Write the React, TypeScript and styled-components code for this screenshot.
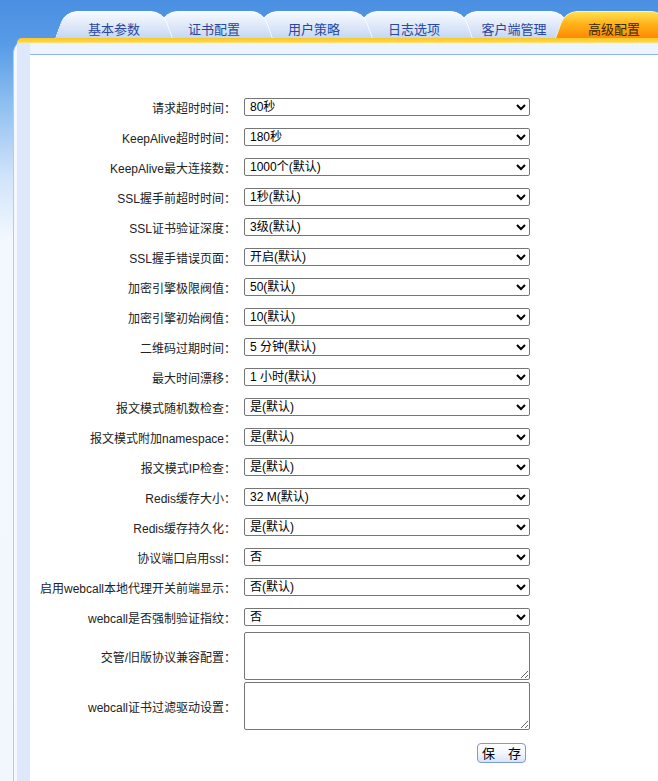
import React from 'react';
import styled, { createGlobalStyle } from 'styled-components';

const GlobalStyle = createGlobalStyle`
  html, body {
    margin: 0;
    padding: 0;
    height: 100%;
  }
  body {
    overflow: hidden;
    font-family: "Liberation Sans", "Noto Sans CJK SC", sans-serif;
    background: linear-gradient(180deg, #4a8fe1 0px, #589be7 45px, #8fc0f0 105px, #cfe3f9 175px, #f3f8ff 240px, #f2f7fe 100%);
  }
`;

const Page = styled.div`
  min-height: 100vh;
  display: flex;
  flex-direction: column;
`;

const TabRow = styled.div`
  height: 38px;
  display: flex;
  align-items: flex-end;
  padding-left: 55px;
  box-sizing: border-box;
`;

interface TabProps {
  $active?: boolean;
  $order: number;
}

const Tab = styled.div<TabProps>`
  position: relative;
  z-index: ${p => (p.$active ? 20 : 10 - p.$order)};
  flex: none;
  width: 118px;
  height: 27px;
  margin-right: -18px;
  padding-top: 12px;
  box-sizing: border-box;
  text-align: center;
  font-size: 13px;
  line-height: 13px;
  color: ${p => (p.$active ? '#3a2600' : '#2947a0')};
  cursor: pointer;

  &::before,
  &::after {
    content: '';
    position: absolute;
    top: 0;
    bottom: 0;
    width: 60%;
    z-index: -1;
    transform-origin: bottom;
    background: ${p =>
      p.$active
        ? 'linear-gradient(180deg, #ffe04e 0%, #ffb31a 45%, #ff8a05 100%)'
        : 'linear-gradient(180deg, #f7faff 0%, #e2ebfa 45%, #c6d7f4 100%)'};
    border-top: 1px solid ${p => (p.$active ? '#fff3b0' : '#ffffff')};
  }

  &::before {
    left: 0;
    transform: skewX(-20deg);
    border-left: 1px solid ${p => (p.$active ? '#fff3b0' : '#ffffff')};
    border-top-left-radius: 12px;
  }

  &::after {
    right: 0;
    transform: skewX(20deg);
    border-right: 1px solid ${p => (p.$active ? '#fff3b0' : '#ffffff')};
    border-top-right-radius: 12px;
  }
`;

const Panel = styled.div`
  flex: 1;
  display: flex;
  flex-direction: column;
  margin-left: 13px;
  border-left: 1px solid #b5cbee;
  border-top-left-radius: 16px;
  background: #f5f9ff;
  padding-left: 3px;
`;

const Band = styled.div`
  height: 5px;
  border-top-left-radius: 14px;
  background: linear-gradient(180deg, #f8c72a 0%, #fbd542 70%, #ffe58c 100%);
`;

const Frame = styled.div`
  flex: 1;
  display: flex;
  flex-direction: column;
  border-left: 13px solid #dde9fa;
  padding-top: 11px;
  background: linear-gradient(180deg, #eef4fd 0%, #f6f9ff 100%);
`;

const Content = styled.div`
  flex: 1;
  background: #ffffff;
  border-top: 1px solid #8db4ee;
  padding-top: 37px;
`;

const Row = styled.div<{ $tall?: boolean }>`
  display: grid;
  grid-template-columns: 214px 286px;
  align-items: center;
  height: ${p => (p.$tall ? '48px' : '30px')};
  margin-bottom: ${p => (p.$tall ? '2px' : '0')};
`;

const Label = styled.label`
  text-align: right;
  padding-right: 8px;
  font-size: 12px;
  color: #222;
  white-space: nowrap;
`;

const Select = styled.select`
  width: 286px;
  height: 18px;
  margin: 0;
  box-sizing: border-box;
  font-family: "Liberation Sans", "Noto Sans CJK SC", sans-serif;
  font-size: 12px;
  color: #000;
  background: #fff;
  border: 1px solid #767676;
  border-radius: 2px;
  padding: 0 0 0 1px;
`;

const TextArea = styled.textarea`
  width: 286px;
  height: 48px;
  margin: 0;
  box-sizing: border-box;
  border: 1px solid #767676;
  border-radius: 2px;
  font-family: "Liberation Sans", "Noto Sans CJK SC", sans-serif;
  font-size: 12px;
`;

const ButtonRow = styled.div`
  display: grid;
  grid-template-columns: 214px 286px;
  margin-top: 13px;
`;

const SaveButton = styled.button`
  grid-column: 2;
  justify-self: end;
  margin-right: 4px;
  width: 49px;
  height: 20px;
  padding: 0;
  font-family: "Noto Sans CJK SC", sans-serif;
  font-size: 13px;
  line-height: 16px;
  color: #000;
  border: 1px solid #7b9bd3;
  border-radius: 4px;
  background: linear-gradient(180deg, #ffffff 0%, #f2f6fd 50%, #d8e4f7 100%);
  white-space: pre;
  cursor: pointer;
`;

const tabs = ['基本参数', '证书配置', '用户策略', '日志选项', '客户端管理', '高级配置'];

const fields: { label: string; value: string; options: string[] }[] = [
  { label: '请求超时时间：', value: '80秒', options: ['30秒', '60秒', '80秒', '120秒'] },
  { label: 'KeepAlive超时时间：', value: '180秒', options: ['60秒', '120秒', '180秒'] },
  { label: 'KeepAlive最大连接数：', value: '1000个(默认)', options: ['500个', '1000个(默认)', '2000个'] },
  { label: 'SSL握手前超时时间：', value: '1秒(默认)', options: ['1秒(默认)', '3秒', '5秒'] },
  { label: 'SSL证书验证深度：', value: '3级(默认)', options: ['1级', '2级', '3级(默认)'] },
  { label: 'SSL握手错误页面：', value: '开启(默认)', options: ['开启(默认)', '关闭'] },
  { label: '加密引擎极限阀值：', value: '50(默认)', options: ['30', '50(默认)', '80'] },
  { label: '加密引擎初始阀值：', value: '10(默认)', options: ['5', '10(默认)', '20'] },
  { label: '二维码过期时间：', value: '5 分钟(默认)', options: ['1 分钟', '5 分钟(默认)', '10 分钟'] },
  { label: '最大时间漂移：', value: '1 小时(默认)', options: ['30 分钟', '1 小时(默认)', '2 小时'] },
  { label: '报文模式随机数检查：', value: '是(默认)', options: ['是(默认)', '否'] },
  { label: '报文模式附加namespace：', value: '是(默认)', options: ['是(默认)', '否'] },
  { label: '报文模式IP检查：', value: '是(默认)', options: ['是(默认)', '否'] },
  { label: 'Redis缓存大小：', value: '32 M(默认)', options: ['16 M', '32 M(默认)', '64 M'] },
  { label: 'Redis缓存持久化：', value: '是(默认)', options: ['是(默认)', '否'] },
  { label: '协议端口启用ssl：', value: '否', options: ['是', '否'] },
  { label: '启用webcall本地代理开关前端显示：', value: '否(默认)', options: ['是', '否(默认)'] },
  { label: 'webcall是否强制验证指纹：', value: '否', options: ['是', '否'] },
];

const textFields = ['交管/旧版协议兼容配置：', 'webcall证书过滤驱动设置：'];

function App() {
  return (
    <Page>
      <GlobalStyle />
      <TabRow>
        {tabs.map((name, i) => (
          <Tab key={name} $order={i} $active={i === tabs.length - 1}>
            {name}
          </Tab>
        ))}
      </TabRow>
      <Panel>
        <Band />
        <Frame>
          <Content>
            {fields.map(f => (
              <Row key={f.label}>
                <Label>{f.label}</Label>
                <Select defaultValue={f.value}>
                  {f.options.map(o => (
                    <option key={o} value={o}>
                      {o}
                    </option>
                  ))}
                </Select>
              </Row>
            ))}
            {textFields.map(label => (
              <Row key={label} $tall>
                <Label>{label}</Label>
                <TextArea />
              </Row>
            ))}
            <ButtonRow>
              <SaveButton type="button">{'保\u3000存'}</SaveButton>
            </ButtonRow>
          </Content>
        </Frame>
      </Panel>
    </Page>
  );
}

export default App;
